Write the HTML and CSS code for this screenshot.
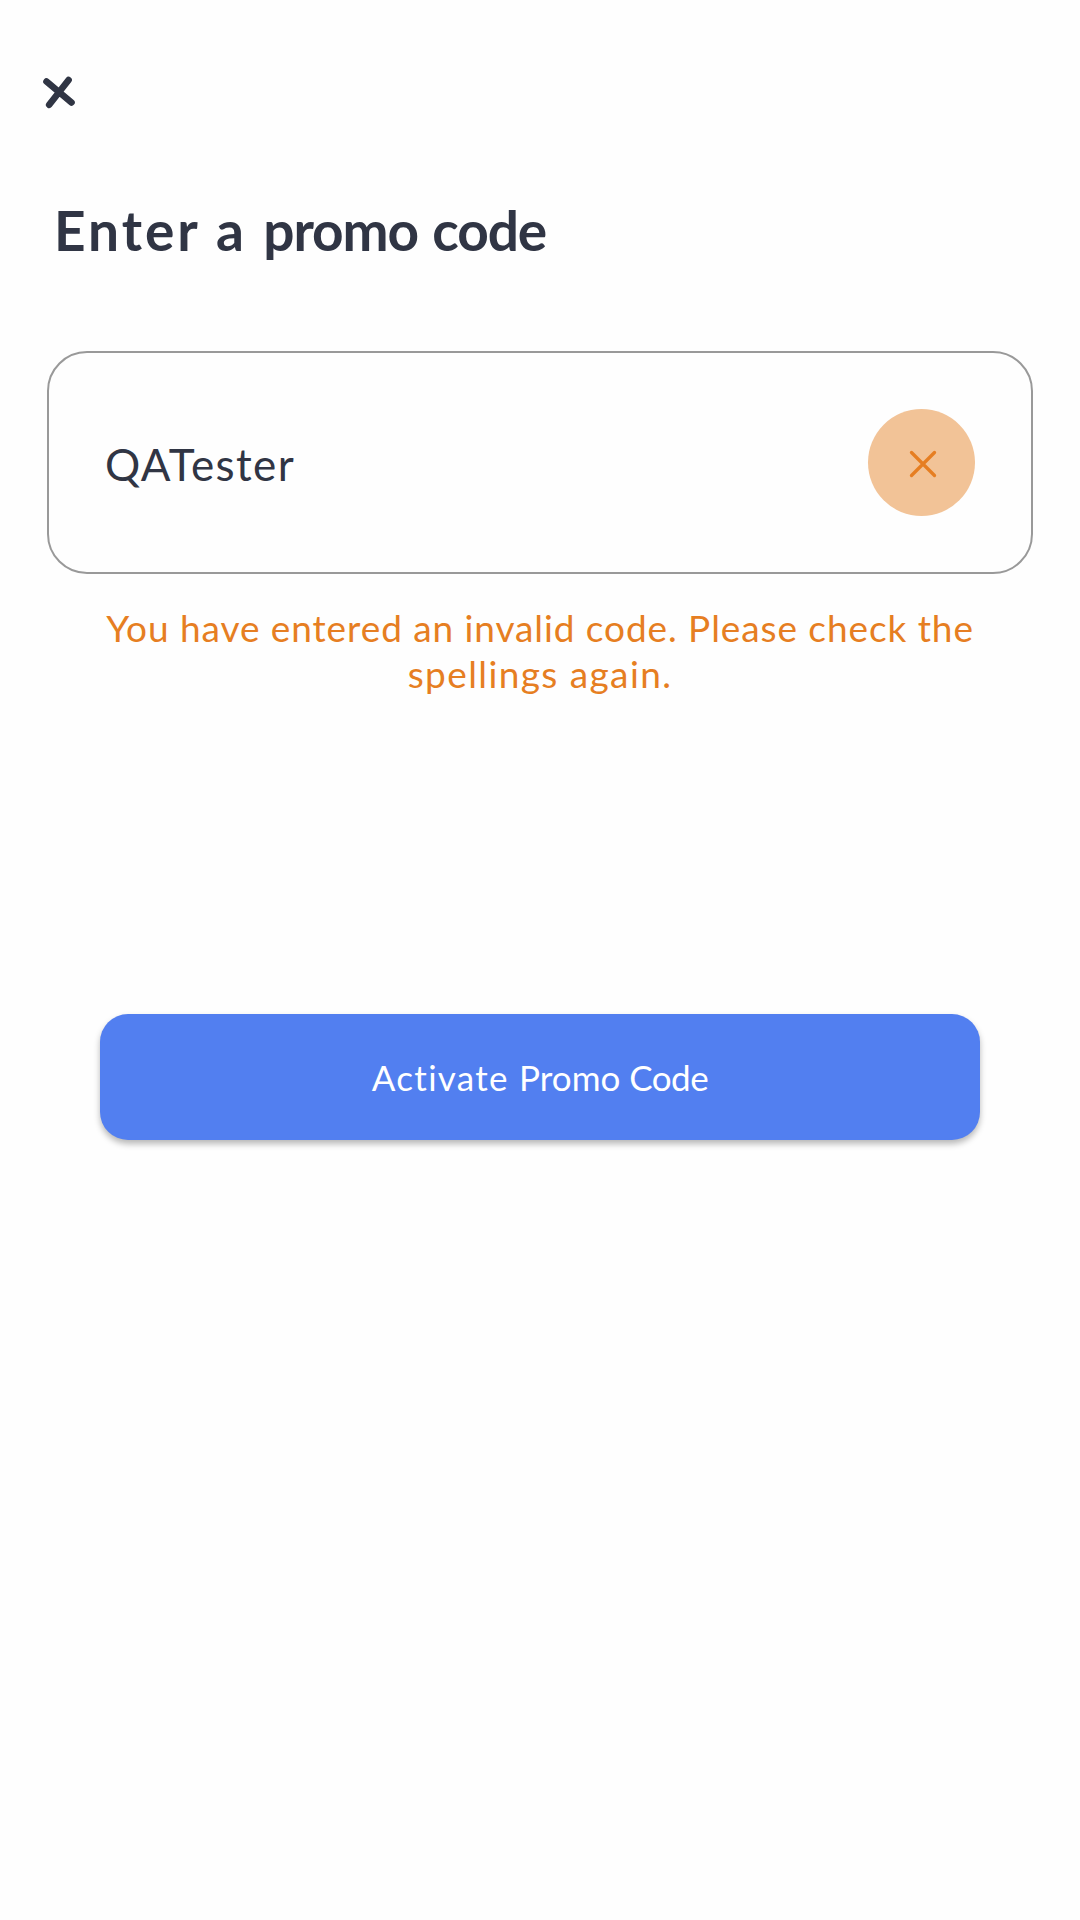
FILE: index.html
```html
<!DOCTYPE html>
<html lang="en">
<head>
<meta charset="utf-8">
<title>Enter a promo code</title>
<link rel="stylesheet" href="styles.css">
</head>
<body>
<main class="screen">
  <button class="close" aria-label="Close">
    <svg width="60" height="60" viewBox="0 0 60 60"><path d="M16.5 21.5L41.5 42.5M38.6 20L19.2 44.8"/></svg>
  </button>
  <h1 class="title"><span class="wide">Enter a </span><span class="tight">promo code</span></h1>
  <div class="field">
    <span class="value">QATester</span>
    <button class="clear" aria-label="Clear">
      <svg width="107" height="107" viewBox="0 0 107 107"><path d="M43.5 43.5L66.5 66.5M66.5 43.5L43.5 66.5"/></svg>
    </button>
  </div>
  <p class="error"><span class="first-line">You have entered an invalid code. Please check the</span><br><span class="second-line">spellings again.</span></p>
  <button class="activate"><span class="wide">Activate </span><span>Promo </span><span class="tight">Code</span></button>
</main>
</body>
</html>
```
FILE: styles.css
```css
* { box-sizing: border-box; }
body {
  margin: 0;
  background: #fefefe;
  color: #303544;
  font-family: Lato, sans-serif;
}
button {
  margin: 0;
  padding: 0;
  border: 0;
  background: none;
  font-family: inherit;
}
svg { display: block; fill: none; stroke-linecap: round; }
.screen {
  min-height: 1920px;
  padding: 60px 47px 0;
  display: flex;
  flex-direction: column;
}
.close { width: 60px; height: 60px; margin-left: -17px; }
.close svg { stroke: #303544; stroke-width: 6.6; }
.title {
  margin: 75px 0 0 7px;
  font-size: 55px;
  line-height: 70px;
  font-weight: 700;
  white-space: nowrap;
}
.title .wide { letter-spacing: 3px; }
.title .tight { letter-spacing: -1.1px; word-spacing: 2px; }
.field {
  height: 223px;
  margin-top: 86px;
  padding: 0 56px 0 56px;
  display: flex;
  align-items: center;
  justify-content: space-between;
  border: 2px solid #999;
  border-radius: 40px;
}
.value { font-size: 44px; line-height: 54px; padding-top: 3px; letter-spacing: 1.4px; }
.clear { width: 107px; height: 107px; border-radius: 50%; background: #f2c397; }
.clear svg { stroke: #e67e22; stroke-width: 3.3; }
.error {
  margin: 31px 0 0;
  color: #e67e22;
  font-size: 37px;
  line-height: 46px;
  text-align: center;
  white-space: nowrap;
}
.first-line { letter-spacing: 0.92px; }
.second-line { letter-spacing: 1.4px; }
.activate {
  height: 126px;
  margin: 317px 53px 0;
  border-radius: 28px;
  background: #527ff0;
  box-shadow: 0 4px 6px rgba(0, 0, 0, 0.28);
  color: #fff;
  font-size: 35px;
  white-space: pre;
}
.activate .wide { letter-spacing: 1.3px; }
.activate .tight { letter-spacing: -0.5px; }
```
